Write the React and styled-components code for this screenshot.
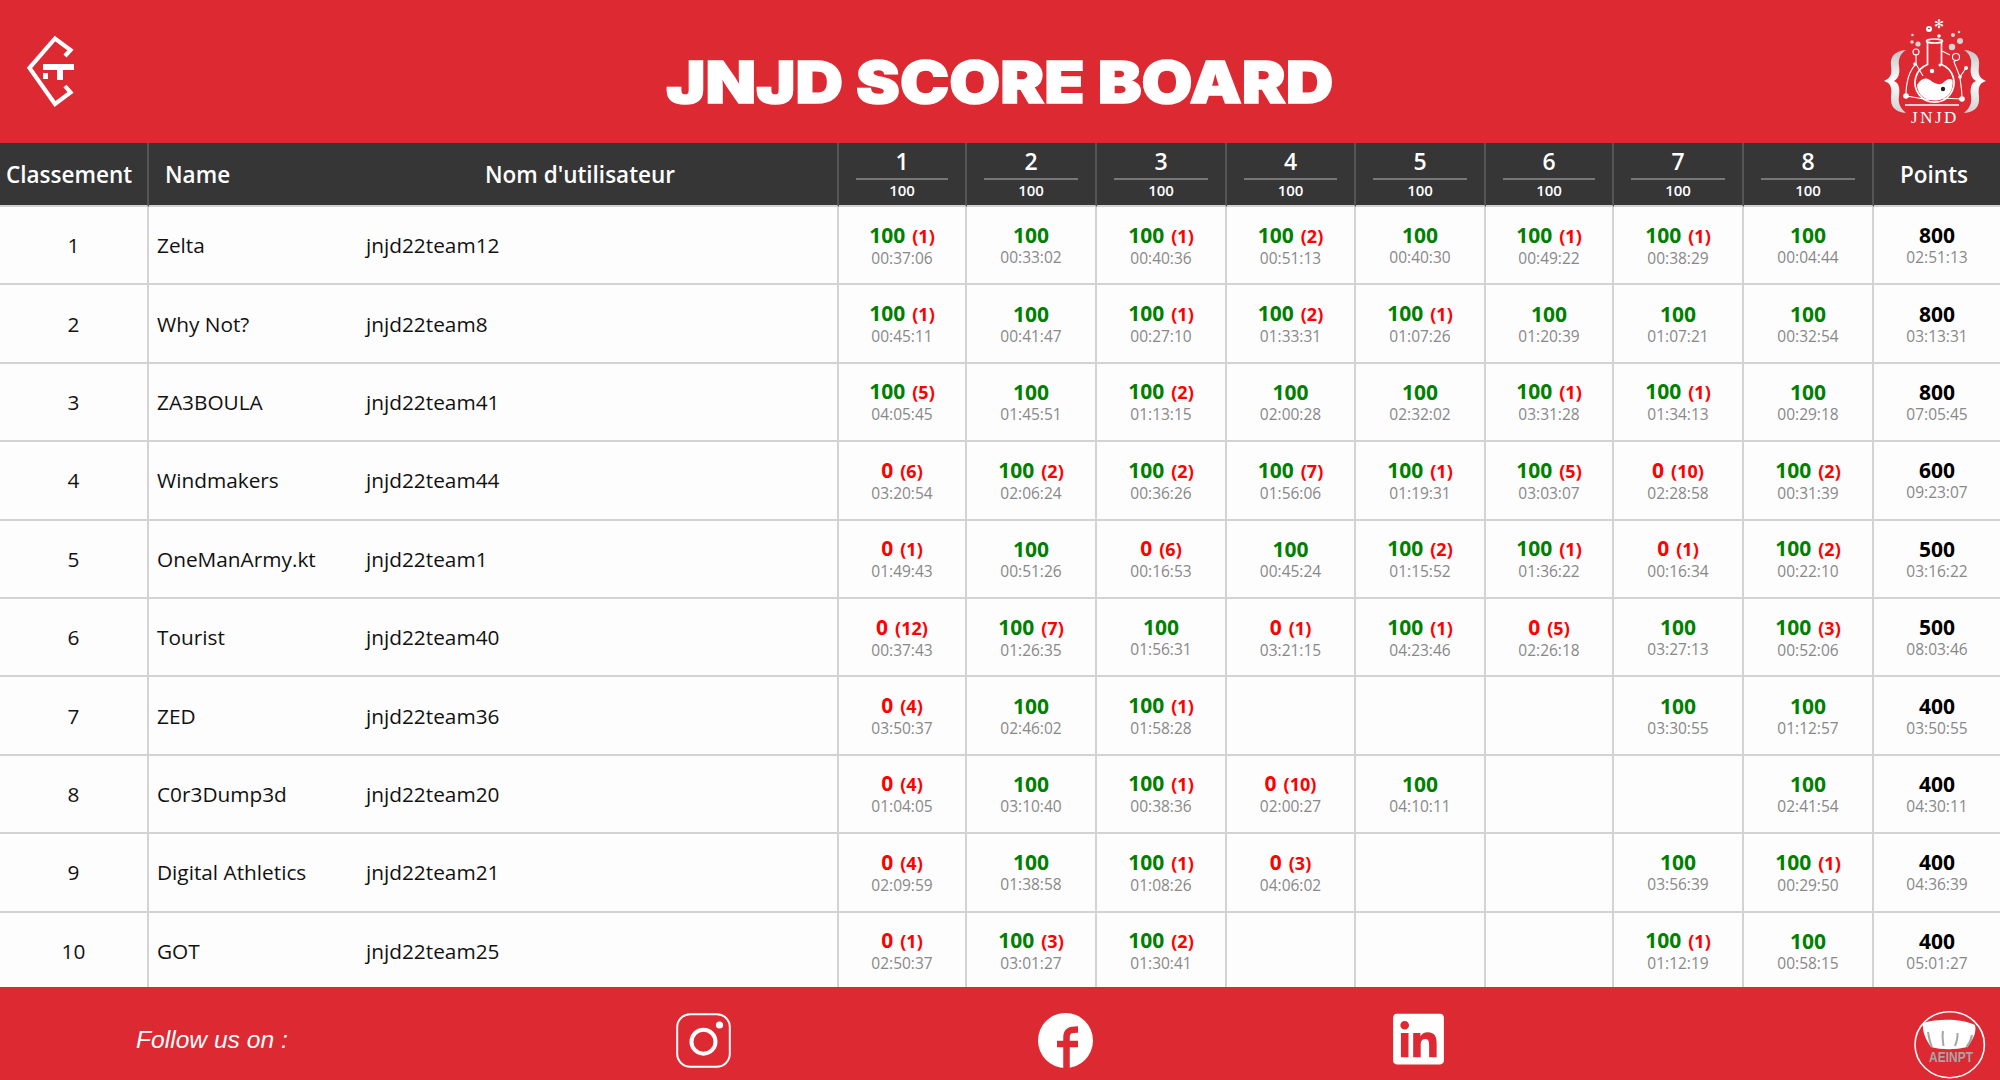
import styled, { createGlobalStyle } from 'styled-components'
import { FaLinkedin } from 'react-icons/fa'

const RED = '#dc2932'
const DARK = '#363636'
const LINE = '#d3d3d3'
const SANS = '"Open Sans", "Noto Sans", sans-serif'

const COLUMNS = [149, 209, 481, 128, 130, 130, 129, 130, 128, 130, 130, 126]
const TASKS = [1, 2, 3, 4, 5, 6, 7, 8]

const ROWS = [
  ['Zelta', 'jnjd22team12', ['100', 1, '00:37:06'], ['100', 0, '00:33:02'], ['100', 1, '00:40:36'], ['100', 2, '00:51:13'], ['100', 0, '00:40:30'], ['100', 1, '00:49:22'], ['100', 1, '00:38:29'], ['100', 0, '00:04:44'], '800', '02:51:13'],
  ['Why Not?', 'jnjd22team8', ['100', 1, '00:45:11'], ['100', 0, '00:41:47'], ['100', 1, '00:27:10'], ['100', 2, '01:33:31'], ['100', 1, '01:07:26'], ['100', 0, '01:20:39'], ['100', 0, '01:07:21'], ['100', 0, '00:32:54'], '800', '03:13:31'],
  ['ZA3BOULA', 'jnjd22team41', ['100', 5, '04:05:45'], ['100', 0, '01:45:51'], ['100', 2, '01:13:15'], ['100', 0, '02:00:28'], ['100', 0, '02:32:02'], ['100', 1, '03:31:28'], ['100', 1, '01:34:13'], ['100', 0, '00:29:18'], '800', '07:05:45'],
  ['Windmakers', 'jnjd22team44', ['0', 6, '03:20:54'], ['100', 2, '02:06:24'], ['100', 2, '00:36:26'], ['100', 7, '01:56:06'], ['100', 1, '01:19:31'], ['100', 5, '03:03:07'], ['0', 10, '02:28:58'], ['100', 2, '00:31:39'], '600', '09:23:07'],
  ['OneManArmy.kt', 'jnjd22team1', ['0', 1, '01:49:43'], ['100', 0, '00:51:26'], ['0', 6, '00:16:53'], ['100', 0, '00:45:24'], ['100', 2, '01:15:52'], ['100', 1, '01:36:22'], ['0', 1, '00:16:34'], ['100', 2, '00:22:10'], '500', '03:16:22'],
  ['Tourist', 'jnjd22team40', ['0', 12, '00:37:43'], ['100', 7, '01:26:35'], ['100', 0, '01:56:31'], ['0', 1, '03:21:15'], ['100', 1, '04:23:46'], ['0', 5, '02:26:18'], ['100', 0, '03:27:13'], ['100', 3, '00:52:06'], '500', '08:03:46'],
  ['ZED', 'jnjd22team36', ['0', 4, '03:50:37'], ['100', 0, '02:46:02'], ['100', 1, '01:58:28'], null, null, null, ['100', 0, '03:30:55'], ['100', 0, '01:12:57'], '400', '03:50:55'],
  ['C0r3Dump3d', 'jnjd22team20', ['0', 4, '01:04:05'], ['100', 0, '03:10:40'], ['100', 1, '00:38:36'], ['0', 10, '02:00:27'], ['100', 0, '04:10:11'], null, null, ['100', 0, '02:41:54'], '400', '04:30:11'],
  ['Digital Athletics', 'jnjd22team21', ['0', 4, '02:09:59'], ['100', 0, '01:38:58'], ['100', 1, '01:08:26'], ['0', 3, '04:06:02'], null, null, ['100', 0, '03:56:39'], ['100', 1, '00:29:50'], '400', '04:36:39'],
  ['GOT', 'jnjd22team25', ['0', 1, '02:50:37'], ['100', 3, '03:01:27'], ['100', 2, '01:30:41'], null, null, null, ['100', 1, '01:12:19'], ['100', 0, '00:58:15'], '400', '05:01:27'],
]

const GlobalStyle = createGlobalStyle`
  html, body {
    margin: 0;
    padding: 0;
    background: #fdfdfd;
  }
`

const Page = styled.div`
  display: flex;
  flex-direction: column;
  width: 2000px;
  height: 1080px;
  overflow: hidden;
  font-family: ${SANS};
`

const Header = styled.header`
  flex: none;
  display: grid;
  grid-template-columns: 1fr auto 1fr;
  height: 143px;
  background: ${RED};
`

const LeftLogo = styled.svg`
  display: block;
  width: 80px;
  height: 90px;
  margin: 25px 0 0 15px;
`

const RightLogo = styled.svg`
  display: block;
  width: 130px;
  height: 120px;
  margin: 10px 0 0 auto;
`

const Title = styled.h1`
  margin: 0;
  padding-top: 49px;
  color: #fff;
  font-family: Inter, sans-serif;
  font-size: 58px;
  line-height: 66px;
  font-weight: 900;
  white-space: nowrap;
  transform: scaleX(1.135);
  -webkit-text-stroke: 1.5px #fff;
`

const Main = styled.main`
  flex: 1;
  min-height: 0;
  overflow: hidden;
`

const Table = styled.table`
  width: 2000px;
  table-layout: fixed;
  border-collapse: separate;
  border-spacing: 0;
`

const Col = styled.col`
  width: ${({ $w }) => $w}px;
`

const HeadCell = styled.th`
  height: 64px;
  padding: 0 ${({ $right }) => $right || 0}px 0 ${({ $pad }) => $pad || 0}px;
  box-sizing: border-box;
  background: ${DARK};
  color: #fff;
  font-size: 22.5px;
  font-weight: 600;
  text-align: ${({ $align }) => $align || 'center'};
  border-right: ${({ $open }) => ($open ? 'none' : '2px solid #555')};
  border-bottom: 2px solid ${LINE};
  &:last-child {
    border-right: none;
  }
`

const TaskNumber = styled.div`
  margin: 0 17px;
  padding-bottom: 1px;
  font-size: 23px;
  line-height: 32px;
  font-weight: 600;
  border-bottom: 2px solid #777;
`

const TaskMax = styled.div`
  padding-bottom: 3px;
  font-size: 15px;
  line-height: 20px;
  font-weight: 600;
`

const Cell = styled.td`
  height: 78.4px;
  padding: 0 ${({ $pad }) => $pad || 0}px;
  box-sizing: border-box;
  background: #fdfdfd;
  color: #111;
  font-size: 20.8px;
  text-align: ${({ $align }) => $align || 'center'};
  white-space: nowrap;
  border-right: ${({ $open }) => ($open ? 'none' : `2px solid ${LINE}`)};
  border-bottom: 2px solid ${LINE};
  &:last-child {
    border-right: none;
  }
`

const Score = styled.div`
  font-size: 21px;
  line-height: 24px;
  font-weight: 700;
  color: ${({ $tone }) => $tone};
`

const Penalty = styled.span`
  margin-left: 7px;
  font-size: 18px;
  color: #f00;
`

const Time = styled.div`
  font-size: 15.5px;
  line-height: 20px;
  color: #888;
`

const Footer = styled.footer`
  flex: none;
  display: grid;
  grid-template-columns: 676px 362px 355px 521px 1fr;
  align-items: start;
  height: 93px;
  background: ${RED};
`

const Follow = styled.div`
  padding: 39px 0 0 136px;
  color: #fff;
  font-family: "Liberation Sans", Arial, sans-serif;
  font-size: 24.6px;
  line-height: 28px;
  font-style: italic;
`

const Social = styled.svg`
  display: block;
  width: 55px;
  height: 55px;
  margin-top: 26px;
`

const LinkedIn = styled(FaLinkedin)`
  display: block;
  width: 51px;
  height: 58px;
  margin-top: 23px;
  color: #fff;
`

const SchoolLogo = styled.svg`
  display: block;
  width: 100px;
  height: 85px;
  margin-top: 8px;
  margin-left: -14px;
`

const TaskCell = ({ result }) => {
  if (!result) return <Cell />
  const [score, penalty, time] = result
  return (
    <Cell>
      <Score $tone={score === '0' ? '#f00' : '#008000'}>
        {score}
        {penalty > 0 && <Penalty>({penalty})</Penalty>}
      </Score>
      <Time>{time}</Time>
    </Cell>
  )
}

const BoardRow = ({ rank, row }) => {
  const [name, user, ...rest] = row
  const results = rest.slice(0, 8)
  const total = rest[8]
  const totalTime = rest[9]
  return (
    <tr>
      <Cell>{rank}</Cell>
      <Cell $align="left" $pad={8} $open>{name}</Cell>
      <Cell $align="left" $pad={8}>{user}</Cell>
      {results.map((result, i) => <TaskCell key={i} result={result} />)}
      <Cell>
        <Score $tone="#000">{total}</Score>
        <Time>{totalTime}</Time>
      </Cell>
    </tr>
  )
}

const TeamLogo = () => (
  <LeftLogo viewBox="15 25 80 90">
    <polyline points="65,56 70.5,50 55,38.5 29.5,68 55,104 70.5,92.5 65,86" fill="none" stroke="#fff" strokeWidth="4.2" />
    <rect x="43" y="64" width="31" height="6" fill="#fff" />
    <rect x="57" y="70" width="6" height="10" fill="#fff" />
    <rect x="43" y="73" width="5" height="6" fill="#fff" />
  </LeftLogo>
)

const FlaskLogo = () => (
  <RightLogo viewBox="0 0 130 120">
    <defs>
      <linearGradient id="braceL" x1="0" y1="0" x2="0" y2="1">
        <stop offset="0" stopColor="#c4c4c4" />
        <stop offset="0.5" stopColor="#fff" />
        <stop offset="1" stopColor="#d0d0d0" />
      </linearGradient>
    </defs>
    <path d="M36 40C24 41 20 47 21 56C22 64 21 68 14 71C21 73 22 78 21 86C20 97 25 102 36 103C30 98 28 93 29 86C30 78 29 73 24 71C29 68 30 63 29 56C28 49 30 44 36 40Z" fill="url(#braceL)" />
    <path d="M94 40C106 41 110 47 109 56C108 64 109 68 116 71C109 73 108 78 109 86C110 97 105 102 94 103C100 98 102 93 101 86C100 78 101 73 106 71C101 68 100 63 101 56C102 49 100 44 94 40Z" fill="url(#braceL)" />
    <g fill="none" stroke="#fff" strokeWidth="1.100">
      <path d="M57.500 32V54.500A19.500 19.500 0 1 0 71.500 54.500V32" strokeWidth="1.700" />
      <ellipse cx="64.500" cy="31" rx="8" ry="2" strokeWidth="1.700" />
      <path d="M36 86C36 68 42 58 46 54L46 44M46 54L53 66M36 86L60 90M92 89C92 76 90 72 90 67L96 58M90 67L84 52L86 50M92 89L70 88M80 45L72 41" />
      <circle cx="46" cy="42" r="3" />
      <circle cx="86" cy="47" r="3.500" />
      <line x1="35" y1="95" x2="89" y2="95" strokeWidth="1.300" />
    </g>
    <path d="M47 75C51 68 56 67 60 70C65 74 70 76 74 72C77 69 80 68 82.500 70C84 83 75 90.500 65 90.500C55 90.500 47.500 85 47 75Z" fill="#fff" />
    <g fill="#fff">
      <circle cx="36" cy="86" r="2.800" />
      <circle cx="92" cy="89" r="2.800" />
      <circle cx="45" cy="54" r="1.800" />
      <circle cx="90" cy="67" r="1.800" />
      <circle cx="96" cy="58" r="2" />
      <circle cx="59" cy="19" r="3" />
      <circle cx="62" cy="61" r="2.200" />
      <circle cx="70" cy="55" r="1.500" />
      <circle cx="69" cy="26" r="1.800" />
      <text x="69" y="18" fontSize="12" textAnchor="middle" fontFamily="Liberation Sans, sans-serif">✻</text>
    </g>
    <g fill="#d4d4d4">
      <circle cx="42.500" cy="25" r="1.300" />
      <circle cx="42" cy="32" r="1.800" />
      <circle cx="48" cy="34" r="2.600" />
      <circle cx="83" cy="25" r="2" />
      <circle cx="89" cy="22" r="1.300" />
      <circle cx="90" cy="31" r="3" />
      <circle cx="82" cy="37" r="3.200" />
    </g>
    <circle cx="59" cy="18.500" r="0.800" fill="#222" />
    <circle cx="73" cy="79" r="2.200" fill="#222" />
    <text x="65" y="112.500" fill="#fff" fontSize="17" letterSpacing="2.500" textAnchor="middle" fontFamily="Liberation Serif, serif">JNJD</text>
  </RightLogo>
)

const InstagramIcon = () => (
  <Social viewBox="0 0 55 55">
    <rect x="1.200" y="1.200" width="52.600" height="52.600" rx="13" fill="none" stroke="#fff" strokeWidth="2" />
    <circle cx="27.500" cy="28.700" r="12" fill="none" stroke="#fff" strokeWidth="4" />
    <circle cx="43.500" cy="12" r="3.600" fill="#fff" />
  </Social>
)

const FacebookIcon = () => (
  <Social viewBox="0 0 55 55">
    <circle cx="27.500" cy="27.500" r="27.500" fill="#fff" />
    <path d="M28.500 55V24C28.500 18 32 16.500 40 16.500M19 31H40" fill="none" stroke={RED} strokeWidth="6.500" />
  </Social>
)

const SchoolBadge = () => (
  <SchoolLogo viewBox="0 0 100 85">
    <ellipse cx="49.700" cy="49.700" rx="34.700" ry="33" fill="none" stroke="#fff" strokeWidth="1.600" />
    <path d="M23 28C40 23 62 24 75 30C77 38 72 46 67 52C55 55 42 55 31 52C26 45 22 37 23 28Z" fill="#fff" />
    <g fill="none" stroke="#a6a6a6" strokeWidth="2">
      <path d="M28 37C29 43 30 48 32 52" />
      <path d="M43 36C42 42 43 47 43.500 51" />
      <path d="M57.500 38C58 43 56.500 47 55 51" />
      <path d="M72 40C71 45 69 49 66.500 52" />
    </g>
    <text x="29" y="67" fill="#a6a6a6" fontSize="14" fontWeight="700" textLength="44" lengthAdjust="spacingAndGlyphs" fontFamily="Liberation Sans, sans-serif">AEINPT</text>
  </SchoolLogo>
)

const App = () => (
  <Page>
    <GlobalStyle />
    <Header>
      <TeamLogo />
      <Title>JNJD SCORE BOARD</Title>
      <FlaskLogo />
    </Header>
    <Main>
      <Table>
        <colgroup>
          {COLUMNS.map((w, i) => <Col key={i} $w={w} />)}
        </colgroup>
        <thead>
          <tr>
            <HeadCell $align="left" $pad={6}>Classement</HeadCell>
            <HeadCell $align="left" $pad={16} $open>Name</HeadCell>
            <HeadCell $align="left" $pad={127}>Nom d'utilisateur</HeadCell>
            {TASKS.map(task => (
              <HeadCell key={task}>
                <TaskNumber>{task}</TaskNumber>
                <TaskMax>100</TaskMax>
              </HeadCell>
            ))}
            <HeadCell $right={6}>Points</HeadCell>
          </tr>
        </thead>
        <tbody>
          {ROWS.map((row, i) => <BoardRow key={row[1]} rank={i + 1} row={row} />)}
        </tbody>
      </Table>
    </Main>
    <Footer>
      <Follow>Follow us on :</Follow>
      <InstagramIcon />
      <FacebookIcon />
      <LinkedIn />
      <SchoolBadge />
    </Footer>
  </Page>
)

export default App
